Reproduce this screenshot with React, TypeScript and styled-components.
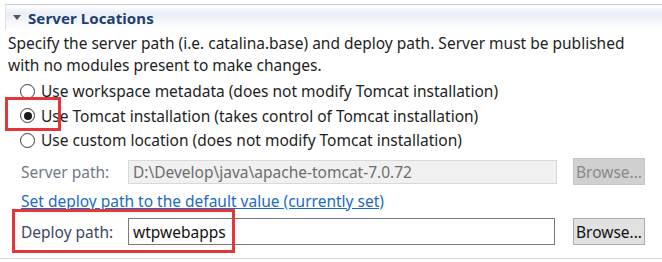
import styled, { createGlobalStyle } from "styled-components";

const GlobalStyle = createGlobalStyle`
  html, body {
    margin: 0;
    padding: 0;
    background: #fff;
  }
  body {
    font-family: "Noto Sans", "Open Sans", sans-serif;
    color: #1e1e1e;
  }
`;

const Page = styled.div`
  width: 662px;
  height: 262px;
  overflow: hidden;
  padding-top: 4px;
  box-sizing: border-box;
`;

const Section = styled.section`
  display: flex;
  flex-direction: column;
  border-bottom: 1px solid #d7dbe2;
  height: 255px;
  box-sizing: border-box;
`;

const Header = styled.div`
  margin-left: 5px;
  height: 26px;
  display: flex;
  align-items: center;
  gap: 7px;
  padding-left: 7px;
  border-top: 1px solid #c9ccd3;
  border-left: 1px solid #dfe2e8;
  background: linear-gradient(#ffffff 0%, #e9edf6 35%, #ffffff 100%);
  box-sizing: border-box;
`;

const Twisty = styled.svg`
  width: 8px;
  height: 6px;
  margin-top: 1px;
`;

const Title = styled.h2`
  margin: 0;
  font-size: 15px;
  font-weight: 700;
  color: #20406e;
  letter-spacing: 0.1px;
`;

const Description = styled.p`
  margin: 2px 0 0 8px;
  font-size: 15.5px;
  line-height: 22px;
  white-space: nowrap;
`;

const RadioGroup = styled.div`
  display: flex;
  flex-direction: column;
  margin-top: 3px;
  padding-left: 20px;
`;

const RadioRow = styled.label`
  display: flex;
  align-items: center;
  gap: 6px;
  height: 24.5px;
  font-size: 15.5px;
  position: relative;
`;

const RadioCircle = styled.span<{ $checked?: boolean }>`
  width: 13px;
  height: 13px;
  border-radius: 50%;
  border: 1px solid #3a3a3a;
  background: #fff;
  display: flex;
  align-items: center;
  justify-content: center;
  flex-shrink: 0;

  &::after {
    content: "";
    width: 8px;
    height: 8px;
    border-radius: 50%;
    background: ${(p) => (p.$checked ? "#1a1a1a" : "transparent")};
  }
`;

const Highlight = styled.span<{ $w: number; $h: number; $x: number; $y: number }>`
  position: absolute;
  left: ${(p) => p.$x}px;
  top: ${(p) => p.$y}px;
  width: ${(p) => p.$w}px;
  height: ${(p) => p.$h}px;
  border: 3px solid #e2363b;
  box-sizing: border-box;
  pointer-events: none;
`;

const FieldRow = styled.div<{ $gap: number }>`
  display: flex;
  align-items: center;
  margin-top: ${(p) => p.$gap}px;
  padding-left: 21px;
  height: 28px;
  position: relative;
`;

const FieldLabel = styled.span<{ $muted?: boolean }>`
  width: 107px;
  font-size: 15.5px;
  color: ${(p) => (p.$muted ? "#707a88" : "#3b4a62")};
`;

const TextInput = styled.div<{ $disabled?: boolean }>`
  width: ${(p) => (p.$disabled ? "429px" : "427px")};
  height: ${(p) => (p.$disabled ? "24px" : "27px")};
  box-sizing: border-box;
  border: 1px solid ${(p) => (p.$disabled ? "#d9d9d9" : "#7a7a7a")};
  background: ${(p) => (p.$disabled ? "#f0f0f0" : "#fff")};
  color: ${(p) => (p.$disabled ? "#6d6d6d" : "#111")};
  font-size: 15.5px;
  display: flex;
  align-items: center;
  padding-left: 4px;
`;

const BrowseButton = styled.button<{ $disabled?: boolean }>`
  margin-left: ${(p) => (p.$disabled ? "16px" : "18px")};
  width: 72px;
  height: 27px;
  box-sizing: border-box;
  border: 1px solid ${(p) => (p.$disabled ? "#c6c6c6" : "#adadad")};
  background: ${(p) => (p.$disabled ? "#d0d0d0" : "#e1e1e1")};
  color: ${(p) => (p.$disabled ? "#8a8a8a" : "#111")};
  font-family: inherit;
  font-size: 15.5px;
  padding: 0;
`;

const LinkRow = styled.a`
  margin: 5px 0 0 21px;
  font-size: 15.5px;
  color: #1c6bc2;
  text-decoration: underline;
  line-height: 20px;
`;

const App = () => {
  return (
    <Page>
      <GlobalStyle />
      <Section>
        <Header>
          <Twisty viewBox="0 0 8 6">
            <path d="M0 0 L8 0 L4 5 Z" fill="#555" />
          </Twisty>
          <Title>Server Locations</Title>
        </Header>
        <Description>
          Specify the server path (i.e. catalina.base) and deploy path. Server must be published
          <br />
          with no modules present to make changes.
        </Description>
        <RadioGroup>
          <RadioRow>
            <RadioCircle />
            Use workspace metadata (does not modify Tomcat installation)
          </RadioRow>
          <RadioRow>
            <RadioCircle $checked />
            Use Tomcat installation (takes control of Tomcat installation)
            <Highlight $x={-15} $y={-7} $w={56} $h={34} />
          </RadioRow>
          <RadioRow>
            <RadioCircle />
            Use custom location (does not modify Tomcat installation)
          </RadioRow>
        </RadioGroup>
        <FieldRow $gap={5}>
          <FieldLabel $muted>Server path:</FieldLabel>
          <TextInput $disabled>D:\Develop\java\apache-tomcat-7.0.72</TextInput>
          <BrowseButton $disabled>Browse...</BrowseButton>
        </FieldRow>
        <LinkRow>Set deploy path to the default value (currently set)</LinkRow>
        <FieldRow $gap={7}>
          <FieldLabel>Deploy path:</FieldLabel>
          <TextInput>wtpwebapps</TextInput>
          <BrowseButton>Browse...</BrowseButton>
          <Highlight $x={12} $y={-9} $w={223} $h={44} />
        </FieldRow>
      </Section>
    </Page>
  );
};

export default App;
